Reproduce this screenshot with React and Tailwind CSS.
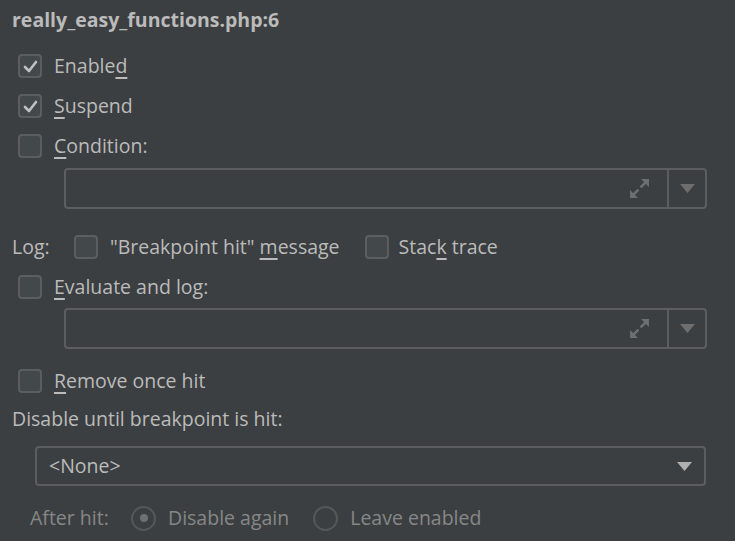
import React from "react";

const FONT = { fontFamily: '"Open Sans", "Noto Sans", sans-serif' };

function Check({ checked }) {
  return (
    <div className="w-[24px] h-[24px] rounded-[4px] border-2 border-[#5b5e5f] bg-[#43494a] flex items-center justify-center shrink-0">
      {checked && (
        <svg width="15" height="13" viewBox="0 0 15 13">
          <path d="M2 7 L6 11 L13 2" fill="none" stroke="#c0c0c0" strokeWidth="2.6" strokeLinecap="round" strokeLinejoin="round" />
        </svg>
      )}
    </div>
  );
}

function U({ children }) {
  return <span className="underline underline-offset-[4px] decoration-[1.5px]">{children}</span>;
}

function Expand() {
  return (
    <svg width="23" height="23" viewBox="0 0 22 22">
      <path d="M12 10 L18 4" stroke="#6b7173" strokeWidth="2.4" />
      <path d="M12.5 2 L20 2 L20 9.5 Z" fill="#6b7173" />
      <path d="M10 12 L4 18" stroke="#6b7173" strokeWidth="2.4" />
      <path d="M2 12.5 L2 20 L9.5 20 Z" fill="#6b7173" />
    </svg>
  );
}

function Arrow({ color = "#6e6e6e" }) {
  return (
    <svg width="15" height="9" viewBox="0 0 15 9">
      <path d="M0 0 L15 0 L7.5 9 Z" fill={color} />
    </svg>
  );
}

function ExprField() {
  return (
    <div className="ml-[64px] w-[643px] h-[41px] rounded-[4px] border-2 border-[#5b5d5e] flex">
      <div className="flex-1 flex items-center justify-end pr-[16px]">
        <Expand />
      </div>
      <div className="w-[38px] border-l-2 border-[#5b5d5e] flex items-center justify-center">
        <Arrow />
      </div>
    </div>
  );
}

function Radio({ selected }) {
  return (
    <div className="w-[25px] h-[25px] rounded-full border-2 border-[#555859] flex items-center justify-center shrink-0">
      {selected && <div className="w-[8px] h-[8px] rounded-full bg-[#6d7072]" />}
    </div>
  );
}

export default function App() {
  return (
    <div className="w-[735px] h-[541px] bg-[#3c3f41] text-[#bbbbbb] text-[19.5px] overflow-hidden" style={FONT}>
      <div className="h-[40px] flex items-center pl-[12px] font-bold text-[19.5px]">really_easy_functions.php:6</div>

      <div className="mt-[6px] h-[40px] flex items-center pl-[18px] gap-[12px]">
        <Check checked />
        <span>Enable<U>d</U></span>
      </div>
      <div className="h-[40px] flex items-center pl-[18px] gap-[12px]">
        <Check checked />
        <span><U>S</U>uspend</span>
      </div>
      <div className="h-[40px] flex items-center pl-[18px] gap-[12px]">
        <Check />
        <span><U>C</U>ondition:</span>
      </div>
      <div className="mt-[2px]">
        <ExprField />
      </div>

      <div className="mt-[18px] h-[40px] flex items-center pl-[12px]">
        <span className="w-[62px]">Log:</span>
        <Check />
        <span className="ml-[12px]">"Breakpoint hit" <U>m</U>essage</span>
        <span className="ml-[25px]"><Check /></span>
        <span className="ml-[10px]">Stac<U>k</U> trace</span>
      </div>
      <div className="h-[40px] flex items-center pl-[18px] gap-[12px]">
        <Check />
        <span><U>E</U>valuate and log:</span>
      </div>
      <div className="mt-[1px]">
        <ExprField />
      </div>

      <div className="mt-[12px] h-[40px] flex items-center pl-[18px] gap-[12px]">
        <Check />
        <span><U>R</U>emove once hit</span>
      </div>
      <div className="h-[36px] flex items-center pl-[12px]">Disable until breakpoint is hit:</div>

      <div className="mt-[9px] ml-[35px] w-[671px] h-[40px] rounded-[4px] border-2 border-[#5b5d5e] flex items-center pl-[12px] pr-[12px] justify-between">
        <span>&lt;None&gt;</span>
        <Arrow color="#b0b0b0" />
      </div>

      <div className="mt-[12px] h-[40px] flex items-center pl-[30px] text-[#878787]">
        <span className="w-[101px]">After hit:</span>
        <Radio selected />
        <span className="ml-[12px]">Disable again</span>
        <span className="ml-[24px]"><Radio /></span>
        <span className="ml-[12px]">Leave enabled</span>
      </div>
    </div>
  );
}
